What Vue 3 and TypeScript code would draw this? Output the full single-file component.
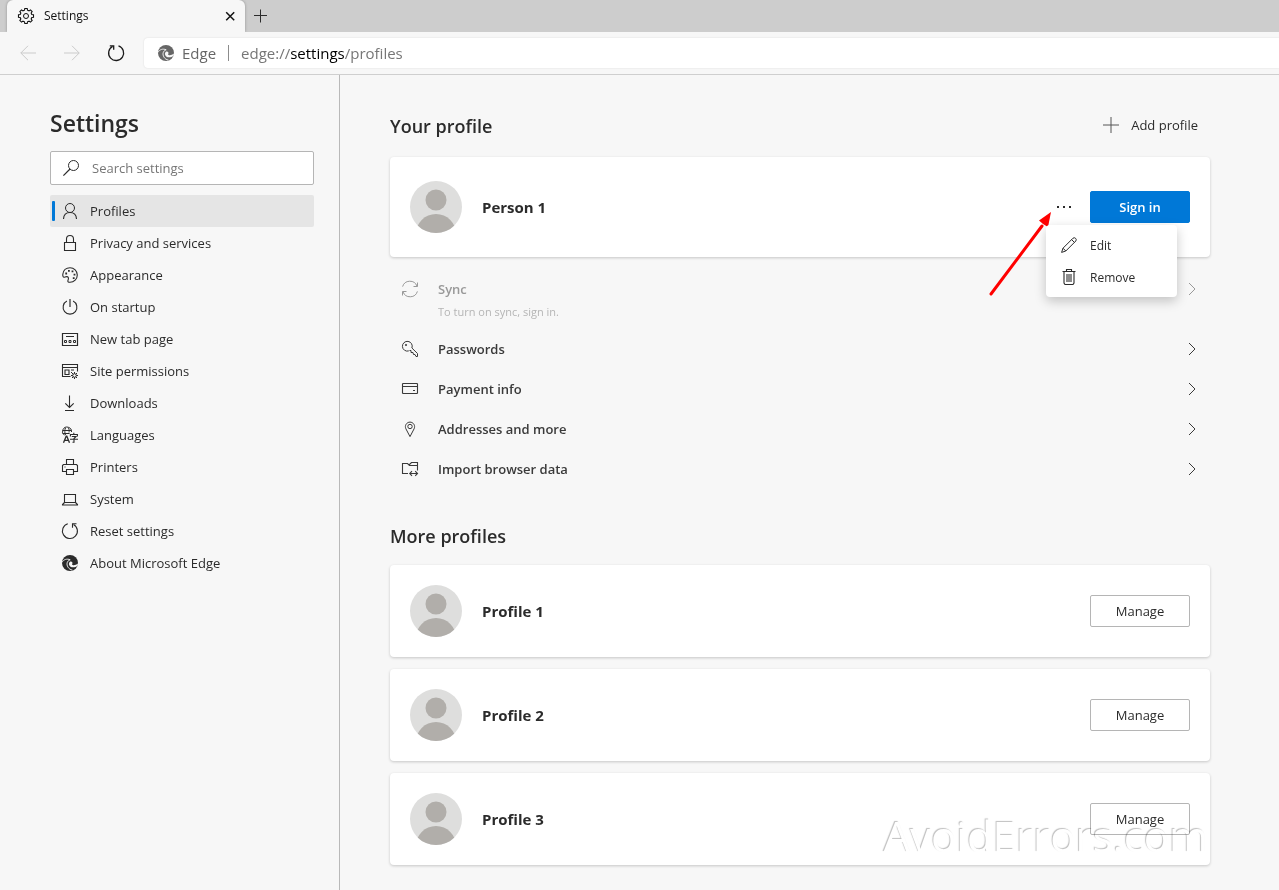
<script setup lang="ts">
import { h, ref } from 'vue'

interface Shape { d: string; fill?: boolean; w?: number; c?: string }

const ring = (x: number, y: number, r: number): string =>
  `M${x - r} ${y}a${r} ${r} 0 1 0 ${2 * r} 0a${r} ${r} 0 1 0 ${-2 * r} 0`

const gearPath = (cx: number, cy: number, outer: number, inner: number, teeth: number): string => {
  const step = (Math.PI * 2) / teeth
  const pts: string[] = []
  for (let i = 0; i < teeth; i++) {
    const a = i * step - Math.PI / 2
    const spots: [number, number][] = [[-0.32, inner], [-0.2, outer], [0.2, outer], [0.32, inner]]
    for (const [o, r] of spots) {
      pts.push(`${(cx + r * Math.cos(a + o * step)).toFixed(2)} ${(cy + r * Math.sin(a + o * step)).toFixed(2)}`)
    }
  }
  return `M${pts.join('L')}Z`
}

const icons: Record<string, Shape[]> = {
  gear: [{ d: gearPath(8, 8, 7.6, 6, 8), w: 1.1 }, { d: ring(8, 8, 2.5) }],
  close: [{ d: 'M4.2 4.2l8 8M12.2 4.2l-8 8', w: 1.5 }],
  plus: [{ d: 'M8.5 1.5v13M2 7.5h13' }],
  add: [{ d: 'M8 0v16M0 8h16' }],
  back: [{ d: 'M16 8H.8M8 .8L.8 8 8 15.2' }],
  forward: [{ d: 'M0 8h15.2M8 .8L15.2 8 8 15.2' }],
  refresh: [{ d: 'M10.5 .9A7.5 7.5 0 1 1 4.6 1.4', w: 1.3 }, { d: 'M1.8 .9h3.9v3.9', w: 1.3 }],
  edge: [
    { d: ring(8, 8, 8), fill: true },
    { d: 'M0 7.4C1.6 4.4 5 3.4 8.2 4.8', c: 'bg', w: 0.9 },
    { d: 'M8.2 4.8C4.8 5.8 4.2 9.4 6 12.2C7 13.8 8.6 14.8 10.4 15', c: 'bg', w: 0.9 },
    { d: 'M8.2 6.4C10.6 6.2 11 8 10 9.2C10.6 10.8 13.4 10.6 16 8.6L15.6 10.8C12.6 13 8.6 12.8 7.4 10.4C6.6 8.8 7 7 8.2 6.4Z', fill: true, c: 'bgfill' },
  ],
  search: [{ d: ring(10.5, 5.5, 5) }, { d: 'M7 9L.4 15.6', w: 1.2 }],
  person: [{ d: ring(8, 5, 4.5) }, { d: 'M1.5 16C1.7 12 4.2 9.5 8 9.5S14.3 12 14.5 16', w: 1.1 }],
  lock: [{ d: 'M2.5 7.5h11v8h-11zM4.5 7.5V4a3.5 3.5 0 0 1 7 0v3.5', w: 1.1 }],
  palette: [
    { d: 'M.8 7.2C1.2 3.4 4.2.7 8 .7a7.3 7.3 0 0 1 0 14.6C6.2 15.3 5.4 14.6 6 13.2C6.8 11.4 6.6 9.8 5 9.6C3.4 9.4 1.8 11 1.2 9.8C.8 9 .7 8 .8 7.2Z', w: 1.1 },
    { d: 'M3.3 5.6h1.8v1.8H3.3zM6 3h1.8v1.8H6zM9.6 3.4h1.8v1.8H9.6zM11.6 6.8h1.8v1.8h-1.8zM10.8 10.2h1.8V12h-1.8z', fill: true },
  ],
  power: [{ d: 'M4.9 2.1A6.9 6.9 0 1 0 11.1 2.1', w: 1.1 }, { d: 'M8 0v8', w: 1.2 }],
  newtab: [
    { d: 'M.5 2.5h15v12H.5z', w: 1.2 },
    { d: 'M4 5.5h8' },
    { d: 'M2.5 9.5h2v2h-2zM7 9.5h2v2H7zM11.5 9.5h2v2h-2z' },
  ],
  permissions: [
    { d: 'M8.5 13.5h-8v-12h15v7M.5 4.5h15M3 7h4v4.5H3zM9 7h3M9 9.5h1', w: 1.1 },
    { d: ring(12.5, 12.5, 1.8) },
    { d: 'M12.5 9v1.7M12.5 14.3V16M9 12.5h1.700M14.3 12.5H16M10 10l1.200 1.200M15 10l-1.200 1.200M10 15l1.200-1.200M15 15l-1.200-1.200' },
  ],
  download: [{ d: 'M7.5.5v12M3.3 8.3l4.2 4.2 4.2-4.2M3 15.5h9', w: 1.1 }],
  languages: [
    { d: 'M9.5 5A4.500 4.500 0 1 0 2.500 8.300M.6 3.500h8.800M.6 6.500h7M3.500 1C2.600 3 2.600 6 3.500 8M6.500 1C7.300 2.500 7.300 4 7 5.500' },
    { d: 'M1.5 15.8l2.7-6.6h.6l2.7 6.6M2.4 13.4h4.2', w: 1.3 },
    { d: 'M11.8 5.8v1.6M8.4 9.4V7.5h7v1.9M9.8 9.5h4.2l-2 2v3.7h-1.5M8 12.2h8', w: 1.1 },
  ],
  printer: [{ d: 'M4.5 5.5v-5h7v5M4.5 12.5h-4v-6l1-1h13l1 1v6h-4M4.5 10.5h7v5h-7zM2.5 8h1', w: 1.1 }],
  laptop: [{ d: 'M2.5 3.5h11v8h-11zM2.5 11.5l-2 2v.5h15v-.5l-2-2', w: 1.1 }],
  reset: [{ d: 'M5.8 .8A7.500 7.500 0 1 0 11.500 1.400', w: 1.1 }, { d: 'M14.500 .8h-4v4', w: 1.1 }],
  sync: [
    { d: 'M.6 5.6A7.6 7.6 0 0 1 15 5.2M15.4 10.4A7.6 7.6 0 0 1 1 10.8' },
    { d: 'M15.5 1.5v4h-4M.5 14.5v-4h4' },
  ],
  key: [
    { d: 'M7.500 9.500h1.500v2h2l.5 2h1.500l1 2h1.500V12.500L9.900 7A4.900 4.900 0 1 0 6.800 9.900' },
    { d: ring(4, 4, 0.7) },
  ],
  card: [{ d: 'M1 2.5h14l.5.5v9l-.5.5H1l-.5-.5V3zM.5 5.5h15M11 9.5h2', w: 1.1 }],
  pin: [{ d: 'M8 15.6L3.9 7.8A4.6 4.6 0 1 1 12.1 7.8Z' }, { d: ring(8, 5.5, 2.2) }],
  importer: [
    { d: 'M6 12.5H.5v-10h5l1.500 1.500 2.500-2.500h6v8M7 4.500h8.500', w: 1.1 },
    { d: 'M7.500 12.500h8M10 10.200L7.700 12.500l2.300 2.300M13.200 10.200l2.300 2.300-2.300 2.300', w: 1.1 },
  ],
  chevron: [{ d: 'M5 2l6 6-6 6' }],
  dots: [{ d: 'M1 7h2v2H1zM7 7h2v2H7zM13 7h2v2h-2z', fill: true }],
  pencil: [{ d: 'M.6 15.4L2 11.2 12 1.2A2 2 0 0 1 14.8 4L4.8 14ZM10.6 2.6l2.8 2.8M2 11.2L4.8 14' }],
  trash: [
    { d: 'M1.5 2.5h13M5.5 2.5v-2h5v2M3 2.500v11.5l1 1.5h8l1-1.5V2.5', w: 1.1 },
    { d: 'M5 5h6v8H5z', fill: true, c: 'soft' },
  ],
}

const navItems = [
  { icon: 'person', label: 'Profiles' },
  { icon: 'lock', label: 'Privacy and services' },
  { icon: 'palette', label: 'Appearance' },
  { icon: 'power', label: 'On startup' },
  { icon: 'newtab', label: 'New tab page' },
  { icon: 'permissions', label: 'Site permissions' },
  { icon: 'download', label: 'Downloads' },
  { icon: 'languages', label: 'Languages' },
  { icon: 'printer', label: 'Printers' },
  { icon: 'laptop', label: 'System' },
  { icon: 'reset', label: 'Reset settings' },
  { icon: 'edge', label: 'About Microsoft Edge' },
]
const links = [
  { icon: 'key', label: 'Passwords' },
  { icon: 'card', label: 'Payment info' },
  { icon: 'pin', label: 'Addresses and more' },
  { icon: 'importer', label: 'Import browser data' },
]
const profiles = ['Profile 1', 'Profile 2', 'Profile 3']
const active = ref('Profiles')
const query = ref('')

const Icon = (props: { name: string }) =>
  h('svg', { class: 'icon', viewBox: '0 0 16 16', 'aria-hidden': 'true' },
    icons[props.name].map((s) => h('path', {
      d: s.d,
      class: [s.fill ? 'solid' : 'line', s.c],
      'stroke-width': s.w ?? 1,
    })))
Icon.props = ['name']

const Avatar = () =>
  h('svg', { class: 'avatar', viewBox: '0 0 52 52', 'aria-hidden': 'true' }, [
    h('defs', [h('clipPath', { id: 'avatar-clip' }, [h('circle', { cx: 26, cy: 26, r: 26 })])]),
    h('circle', { cx: 26, cy: 26, r: 26, fill: '#dededd' }),
    h('circle', { cx: 26, cy: 19, r: 10.5, fill: '#b1aeaa' }),
    h('circle', { cx: 26, cy: 53.2, r: 20.2, fill: '#b1aeaa', 'clip-path': 'url(#avatar-clip)' }),
  ])
</script>

<template>
  <div class="browser">
    <header>
      <div class="tabs">
        <div class="tab">
          <Icon name="gear" />
          <span class="tab-title">Settings</span>
          <button class="plain tab-close" aria-label="Close tab"><Icon name="close" /></button>
        </div>
        <button class="plain new-tab" aria-label="New tab"><Icon name="plus" /></button>
      </div>
      <div class="toolbar">
        <button class="plain tool" aria-label="Back" disabled><Icon name="back" /></button>
        <button class="plain tool" aria-label="Forward" disabled><Icon name="forward" /></button>
        <button class="plain tool" aria-label="Refresh"><Icon name="refresh" /></button>
        <div class="omnibox">
          <Icon name="edge" />
          <span class="site">Edge</span>
          <div class="url" role="textbox" aria-label="Address" contenteditable="true" spellcheck="false">edge://<b>settings</b>/profiles</div>
        </div>
      </div>
    </header>

    <div class="body">
      <aside class="sidebar">
        <h1>Settings</h1>
        <label class="search">
          <Icon name="search" />
          <input v-model="query" type="search" placeholder="Search settings" aria-label="Search settings">
        </label>
        <nav>
          <a
            v-for="item in navItems" :key="item.label" href="#" class="nav-item"
            :class="{ active: item.label === active }" @click.prevent="active = item.label"
          >
            <Icon :name="item.icon" />
            <span>{{ item.label }}</span>
          </a>
        </nav>
      </aside>

      <main>
        <div class="content">
          <div class="heading">
            <h2>Your profile</h2>
            <button class="plain add"><Icon name="add" /><span>Add profile</span></button>
          </div>
          <section class="card current">
            <Avatar />
            <h3>Person 1</h3>
            <button class="plain more" aria-label="More actions"><Icon name="dots" /></button>
            <button class="btn primary">Sign in</button>
            <div class="menu" role="menu">
              <button class="plain" role="menuitem"><Icon name="pencil" /><span>Edit</span></button>
              <button class="plain" role="menuitem"><Icon name="trash" /><span>Remove</span></button>
            </div>
            <svg class="pointer" viewBox="0 0 64 88" aria-hidden="true">
              <path d="M3 84L54 16" stroke="#f00" stroke-width="3" stroke-linecap="round" />
              <path d="M63 2L60 17L55 14L51 10.500Z" fill="#f00" />
            </svg>
          </section>

          <div class="links">
            <a href="#" class="row sync" aria-disabled="true">
              <Icon name="sync" />
              <span class="row-label">Sync</span>
              <Icon name="chevron" />
              <small>To turn on sync, sign in.</small>
            </a>
            <a v-for="link in links" :key="link.label" href="#" class="row">
              <Icon :name="link.icon" />
              <span class="row-label">{{ link.label }}</span>
              <Icon name="chevron" />
            </a>
          </div>

          <h2 class="more-title">More profiles</h2>
          <div class="profiles">
            <section v-for="name in profiles" :key="name" class="card">
              <Avatar />
              <h3>{{ name }}</h3>
              <button class="btn">Manage</button>
            </section>
            <div class="watermark">AvoidErrors.com</div>
          </div>
        </div>
      </main>
    </div>
  </div>
</template>

<style>
body {
  margin: 0;
  background: #f7f7f7;
}
</style>

<style scoped>
.browser {
  min-height: 100vh;
  display: flex;
  flex-direction: column;
  overflow-x: hidden;
  font: 13px/20px "Open Sans", "Noto Sans", sans-serif;
  color: #2b2b2b;
  background: #f7f7f7;
}
.browser :deep(.icon) {
  width: 16px;
  height: 16px;
  flex: none;
  overflow: visible;
}
.browser :deep(.line) { fill: none; stroke: currentColor; }
.browser :deep(.solid) { fill: currentColor; }
.browser :deep(.bg) { stroke: #f7f7f7; }
.browser :deep(.bgfill) { fill: #f7f7f7; }
.browser :deep(.soft) { fill: #8c8c8c; }
.browser :deep(.avatar) {
  width: 52px;
  height: 52px;
  flex: none;
}
h1, h2, h3 { margin: 0; font-weight: 600; }
a { color: inherit; text-decoration: none; }
.plain {
  display: flex;
  align-items: center;
  padding: 0;
  border: 0;
  background: none;
  color: inherit;
  font: inherit;
}
.tabs {
  display: flex;
  height: 32px;
  padding-left: 7px;
  background: #cdcdcd;
}
.tab {
  display: flex;
  align-items: center;
  box-sizing: border-box;
  width: 238px;
  padding: 0 7px 0 11px;
  border-radius: 6px 6px 0 0;
  background: #f7f7f7;
  box-shadow: 0 0 3px rgba(0, 0, 0, 0.3);
  font-size: 12px;
  color: #111;
}
.tab-title { flex: 1; padding-left: 10px; }
.new-tab { padding: 0 7px; }
.toolbar {
  position: relative;
  display: flex;
  align-items: center;
  gap: 28px;
  height: 42px;
  padding-left: 20px;
  border-bottom: 1px solid #cfcfcf;
  background: #f7f7f7;
}
.tool { color: #1b1b1b; }
.tool:disabled { color: #cbcbcb; }
.omnibox {
  display: flex;
  align-items: center;
  flex: 1;
  height: 30px;
  margin-left: -8px;
  padding-left: 14px;
  border-radius: 4px 0 0 4px;
  background: #fff;
  box-shadow: 0 0 2px rgba(0, 0, 0, 0.12);
  font-size: 15px;
  color: #666;
}
.site {
  padding: 0 12px 0 8px;
  border-right: 1px solid #8c8c8c;
  line-height: 16px;
}
.url { padding-left: 12px; outline: 0; color: #767676; }
.url b { font-weight: 400; color: #000; }
.body { display: flex; flex: 1; }
.sidebar {
  box-sizing: border-box;
  width: 340px;
  flex: none;
  padding: 32px 25px 0 50px;
  border-right: 1px solid #b9b9b9;
}
h1 { font-size: 23px; line-height: 32px; }
.search {
  display: flex;
  align-items: center;
  box-sizing: border-box;
  height: 34px;
  margin: 12px 0 10px;
  padding: 0 12px;
  border: 1px solid #b5b5b5;
  border-radius: 2px;
  background: #fff;
}
.search input {
  flex: 1;
  min-width: 0;
  padding: 0 0 0 13px;
  border: 0;
  outline: 0;
  background: none;
  font: inherit;
  color: inherit;
}
.search input::placeholder { color: #767676; opacity: 1; }
.nav-item {
  position: relative;
  display: flex;
  align-items: center;
  gap: 12px;
  height: 32px;
  padding-left: 12px;
  border-radius: 2px;
}
.nav-item.active { background: #e5e5e5; }
.nav-item.active::before {
  content: "";
  position: absolute;
  left: 2px;
  top: 6px;
  bottom: 6px;
  width: 3px;
  border-radius: 1px;
  background: #0078d7;
}
main { flex: 1; min-width: 0; padding: 34px 50px 24px; }
.content { max-width: 820px; }
.heading {
  display: flex;
  align-items: center;
  justify-content: space-between;
  height: 34px;
  margin-bottom: 14px;
}
h2 { font-size: 18px; line-height: 28px; }
.add { gap: 12px; padding: 0 12px 2px 0; }
.add .icon { color: #555; }
.card {
  position: relative;
  display: flex;
  align-items: center;
  box-sizing: border-box;
  height: 92px;
  padding: 0 20px;
  border-radius: 4px;
  background: #fff;
  box-shadow: 0 1px 3px rgba(0, 0, 0, 0.2);
}
.current { height: 100px; }
h3 { flex: 1; margin-left: 20px; font-size: 15px; font-weight: 700; }
.more { margin-right: 18px; }
.btn {
  width: 100px;
  height: 32px;
  padding: 0;
  border: 1px solid #b5b5b5;
  border-radius: 2px;
  background: #fff;
  color: #2b2b2b;
  font: inherit;
}
.primary { border-color: #0078d7; background: #0078d7; color: #fff; font-weight: 600; }
.menu {
  position: absolute;
  z-index: 2;
  top: 68px;
  right: 33px;
  box-sizing: border-box;
  width: 131px;
  padding: 4px 0;
  border-radius: 4px;
  background: #fff;
  box-shadow: 0 4px 12px rgba(0, 0, 0, 0.22);
  font-size: 12px;
}
.menu button { width: 100%; height: 32px; gap: 13px; padding-left: 15px; }
.menu span { padding-top: 2px; }
.pointer {
  position: absolute;
  top: 53px;
  right: 158px;
  width: 64px;
  height: 88px;
}
.links { padding-top: 12px; }
.row {
  display: flex;
  align-items: center;
  flex-wrap: wrap;
  height: 40px;
  padding: 0 10px 0 12px;
  font-weight: 600;
  color: #3a3a3a;
}
.row-label { flex: 1; padding-left: 20px; }
.sync {
  height: 50px;
  padding-top: 10px;
  align-content: flex-start;
  color: #999;
}
.sync small {
  width: 100%;
  padding-left: 36px;
  font-size: 11px;
  line-height: 26px;
  font-weight: 400;
  color: #b5b5b5;
}
.more-title { margin: 33px 0 15px; }
.profiles { position: relative; display: grid; gap: 12px; }
.watermark {
  position: absolute;
  right: 2px;
  bottom: 0;
  font-size: 42px;
  line-height: 58px;
  color: #fff;
  text-shadow: -1px -1px 1px rgba(0, 0, 0, 0.25);
  mix-blend-mode: multiply;
  pointer-events: none;
}
</style>
